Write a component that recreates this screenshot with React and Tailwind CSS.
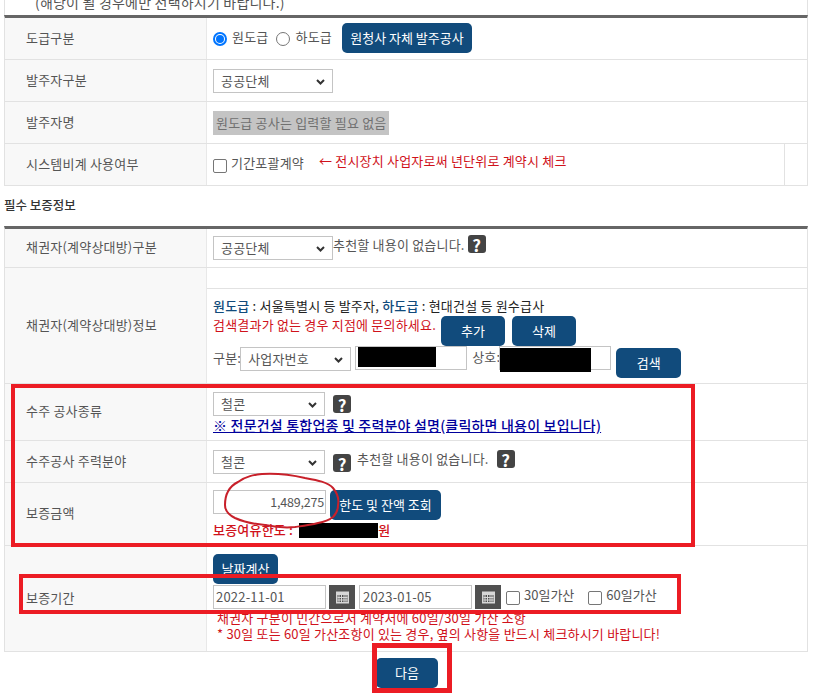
import React from 'react';

const Row = ({ label, h, children }) => (
  <div className={`flex border-b border-[#e2e2e2] ${h}`}>
    <div className="w-[202px] shrink-0 bg-[#f8f8f8] border-r border-[#e8e8e8] pl-[21px] pb-[2px] flex items-center">{label}</div>
    <div className="flex-1 min-w-0">{children}</div>
  </div>
);

const Btn = ({ className, children }) => (
  <button className={`bg-[#114b7c] text-white text-[13px] tracking-normal rounded-[5px] ${className}`}>{children}</button>
);

const Select = ({ value, className }) => (
  <div className={`relative border border-[#c4c4c4] bg-white h-[24px] flex items-center pl-[7px] ${className}`}>
    <span>{value}</span>
    <svg className="absolute right-[7px] top-[9px]" width="9" height="6" viewBox="0 0 9 6">
      <path d="M1 1l3.5 3.5L8 1" fill="none" stroke="#333" strokeWidth="2" />
    </svg>
  </div>
);

const Help = ({ className }) => (
  <span className={`inline-flex items-center justify-center w-[18px] h-[18px] bg-[#444] rounded-[3px] text-white font-bold text-[17px] leading-none tracking-normal ${className}`}>?</span>
);

const Calendar = () => (
  <span className="w-[26px] h-[24px] bg-[#505050] flex items-center justify-center ml-[3px]">
    <svg width="15" height="14" viewBox="0 0 15 14" fill="none">
      <rect x="1" y="1.5" width="13" height="12" fill="#d8d8d8" />
      <rect x="2.5" y="5" width="10" height="7" fill="#505050" />
      <path d="M4 5v7M6.5 5v7M9 5v7M11 5v7M2.5 7.5h10M2.5 10h10" stroke="#d8d8d8" strokeWidth="1" />
    </svg>
  </span>
);

export default function App() {
  return (
    <div className="relative w-[817px] h-[693px] overflow-hidden bg-white text-[13px] tracking-[0.2px] text-[#555] font-['Noto_Sans_CJK_KR','Liberation_Sans',sans-serif]">
      <div className="ml-[4px] w-[804px]">
        <div className="h-[15px] border-x border-[#e2e2e2] pl-[30px] leading-[4px] text-[14px] text-[#555]">(해당이 될 경우에만 선택하시기 바랍니다.)</div>
        <div className="border-t-[3px] border-[#666] border-x border-x-[#e2e2e2]">
          <Row label="도급구분" h="h-[42px]">
            <div className="flex items-center h-full pl-[6px]">
              <span className="w-[14px] h-[14px] rounded-full border-2 border-[#0075ff] flex items-center justify-center"><span className="w-[8px] h-[8px] rounded-full bg-[#0075ff]" /></span>
              <span className="ml-[5px] -mt-[4px]">원도급</span>
              <span className="ml-[8px] w-[14px] h-[14px] rounded-full border border-[#767676]" />
              <span className="ml-[5px] -mt-[4px]">하도급</span>
              <Btn className="ml-[10px] w-[130px] h-[30px] -mt-[1px]">원청사 자체 발주공사</Btn>
            </div>
          </Row>
          <Row label="발주자구분" h="h-[42px]">
            <div className="flex items-center h-full pl-[6px]">
              <Select value="공공단체" className="w-[120px]" />
            </div>
          </Row>
          <Row label="발주자명" h="h-[42px]">
            <div className="flex items-center h-full pl-[6px]">
              <div className="w-[176px] h-[24px] bg-[#c4c4c4] flex items-center pl-[3px] text-[#707070]">원도급 공사는 입력할 필요 없음</div>
            </div>
          </Row>
          <Row label="시스템비계 사용여부" h="h-[42px]">
            <div className="flex h-full">
              <div className="flex-1 flex items-center pl-[6px] border-r border-[#e2e2e2]">
                <span className="w-[14px] h-[14px] rounded-[2px] border border-[#767676] mt-[2px]" />
                <span className="ml-[4px] -mt-[4px]">기간포괄계약</span>
                <span className="ml-[15px] -mt-[7px] text-[#d0121b]">← 전시장치 사업자로써 년단위로 계약시 체크</span>
              </div>
              <div className="w-[22px]" />
            </div>
          </Row>
        </div>

        <div className="h-[40px] flex items-center font-medium text-[12.5px] text-[#333] tracking-normal pb-[1px]">필수 보증정보</div>

        <div className="border-t-[3px] border-[#666] border-x border-x-[#e2e2e2]">
          <Row label="채권자(계약상대방)구분" h="h-[39px]">
            <div className="flex h-full pl-[6px] pt-[7px]">
              <Select value="공공단체" className="w-[120px]" />
              <span className="-mt-[1px]">추천할 내용이 없습니다.</span>
              <Help className="ml-[3px] -mt-[1px]" />
            </div>
          </Row>
          <Row label="채권자(계약상대방)정보" h="h-[116px]">
            <div className="h-[21px] border-b border-[#e2e2e2]" />
            <div className="pl-[6px] pt-[8px]">
              <div className="leading-[18px] text-[#222]">
                <b className="text-[#114b7c] font-medium">원도급</b> : 서울특별시 등 발주자, <b className="text-[#114b7c] font-medium">하도급</b> : 현대건설 등 원수급사
              </div>
              <div className="flex items-start mt-[1px]">
                <span className="text-[#d0121b] leading-[18px]">검색결과가 없는 경우 지점에 문의하세요.</span>
                <Btn className="ml-[5px] w-[64px] h-[30px]">추가</Btn>
                <Btn className="ml-[7px] w-[64px] h-[30px]">삭제</Btn>
              </div>
              <div className="flex items-start mt-[1px]">
                <span className="mt-[1px]">구분:</span>
                <Select value="사업자번호" className="w-[111px] -ml-[1px]" />
                <span className="relative ml-[4px] w-[112px] h-[24px] border border-[#c4c4c4] -mt-[1px]">
                  <span className="absolute left-[2px] top-[0px] w-[78px] h-[20px] bg-black" />
                </span>
                <span className="ml-[5px]">상호:</span>
                <span className="relative w-[112px] h-[24px] border border-[#c4c4c4] -mt-[1px] -ml-[1px]">
                  <span className="absolute left-0 top-[1px] w-[91px] h-[24px] bg-black" />
                </span>
                <Btn className="ml-[5px] w-[65px] h-[30px] mt-[1px]">검색</Btn>
              </div>
            </div>
          </Row>
          <Row label="수주 공사종류" h="h-[57px]">
            <div className="pl-[6px] pt-[8px]">
              <div className="flex items-center">
                <Select value="철콘" className="w-[112px]" />
                <Help className="ml-[8px]" />
              </div>
              <div className="text-[14px] text-[#00009c] underline font-medium leading-[18px]">※ 전문건설 통합업종 및 주력분야 설명(클릭하면 내용이 보입니다)</div>
            </div>
          </Row>
          <Row label="수주공사 주력분야" h="h-[42px]">
            <div className="flex pl-[6px] pt-[9px]">
              <Select value="철콘" className="w-[112px]" />
              <Help className="ml-[8px] mt-[4px]" />
              <span className="ml-[6px] -mt-[1px]">추천할 내용이 없습니다.</span>
              <Help className="ml-[8px]" />
            </div>
          </Row>
          <Row label="보증금액" h="h-[63px]">
            <div className="pl-[6px] pt-[7px]">
              <div className="flex items-start">
                <div className="w-[113px] h-[24px] border border-[#c4c4c4] flex items-center justify-end pr-[1px] text-[12.5px] tracking-[-0.2px]">1,489,275</div>
                <Btn className="ml-[4px] w-[111px] h-[30px]">한도 및 잔액 조회</Btn>
              </div>
              <div className="flex items-center font-medium text-[#d0121b] mt-[1px] leading-[18px]">
                보증여유한도 :<span className="ml-[6px] w-[79px] h-[15px] bg-black" />원
              </div>
            </div>
          </Row>
          <Row label="보증기간" h="h-[106px]">
            <div className="pl-[6px] pt-[8px]">
              <Btn className="w-[65px] h-[30px] block">날짜계산</Btn>
              <div className="flex items-center mt-[1px]">
                <div className="w-[113px] h-[24px] border border-[#c4c4c4] flex items-center pl-[2px]">2022-11-01</div>
                <Calendar />
                <div className="ml-[4px] w-[113px] h-[24px] border border-[#c4c4c4] flex items-center pl-[3px]">2023-01-05</div>
                <Calendar />
                <span className="ml-[5px] w-[14px] h-[14px] rounded-[2px] border border-[#767676] mt-[2px]" />
                <span className="ml-[4px] -mt-[4px] tracking-normal">30일가산</span>
                <span className="ml-[14px] w-[14px] h-[14px] rounded-[2px] border border-[#767676] mt-[2px]" />
                <span className="ml-[4px] -mt-[4px] tracking-normal">60일가산</span>
              </div>
              <div className="text-[#d0121b] pl-[4px] leading-[16px] mt-[1px]">
                <div>채권자 구분이 민간으로서 계약서에 60일/30일 가산 조항</div>
                <div>* 30일 또는 60일 가산조항이 있는 경우, 옆의 사항을 반드시 체크하시기 바랍니다!</div>
              </div>
            </div>
          </Row>
        </div>

        <div className="flex justify-center mt-[6px]">
          <Btn className="w-[62px] h-[30px] ml-[2px]">다음</Btn>
        </div>
      </div>

      {/* red marker boxes drawn over the capture */}
      <div className="absolute left-[11px] top-[384px] w-[684px] h-[163px] border-[4px] border-[#ec1c24]" />
      <div className="absolute left-[19px] top-[574px] w-[662px] h-[40px] border-[4px] border-[#ec1c24]" />
      <div className="absolute left-[372px] top-[643px] w-[80px] h-[50px] border-[5px] border-[#ec1c24]" />
      <svg className="absolute left-[220px] top-[470px]" width="125" height="62" viewBox="0 0 125 62" fill="none">
        <path d="M5 35C5 24 10 16 18 12C26 6 34 5 42 4C58 3 72 5 85 8C96 10 108 12 113 18C118 24 119 30 118 35C118 40 116 44 113 47C108 51 104 52 98 53C90 55 82 56 75 57C65 58 55 57 45 55C34 54 24 52 15 48C9 45 5 41 5 35z" stroke="#c8202a" strokeWidth="2" />
      </svg>
    </div>
  );
}
